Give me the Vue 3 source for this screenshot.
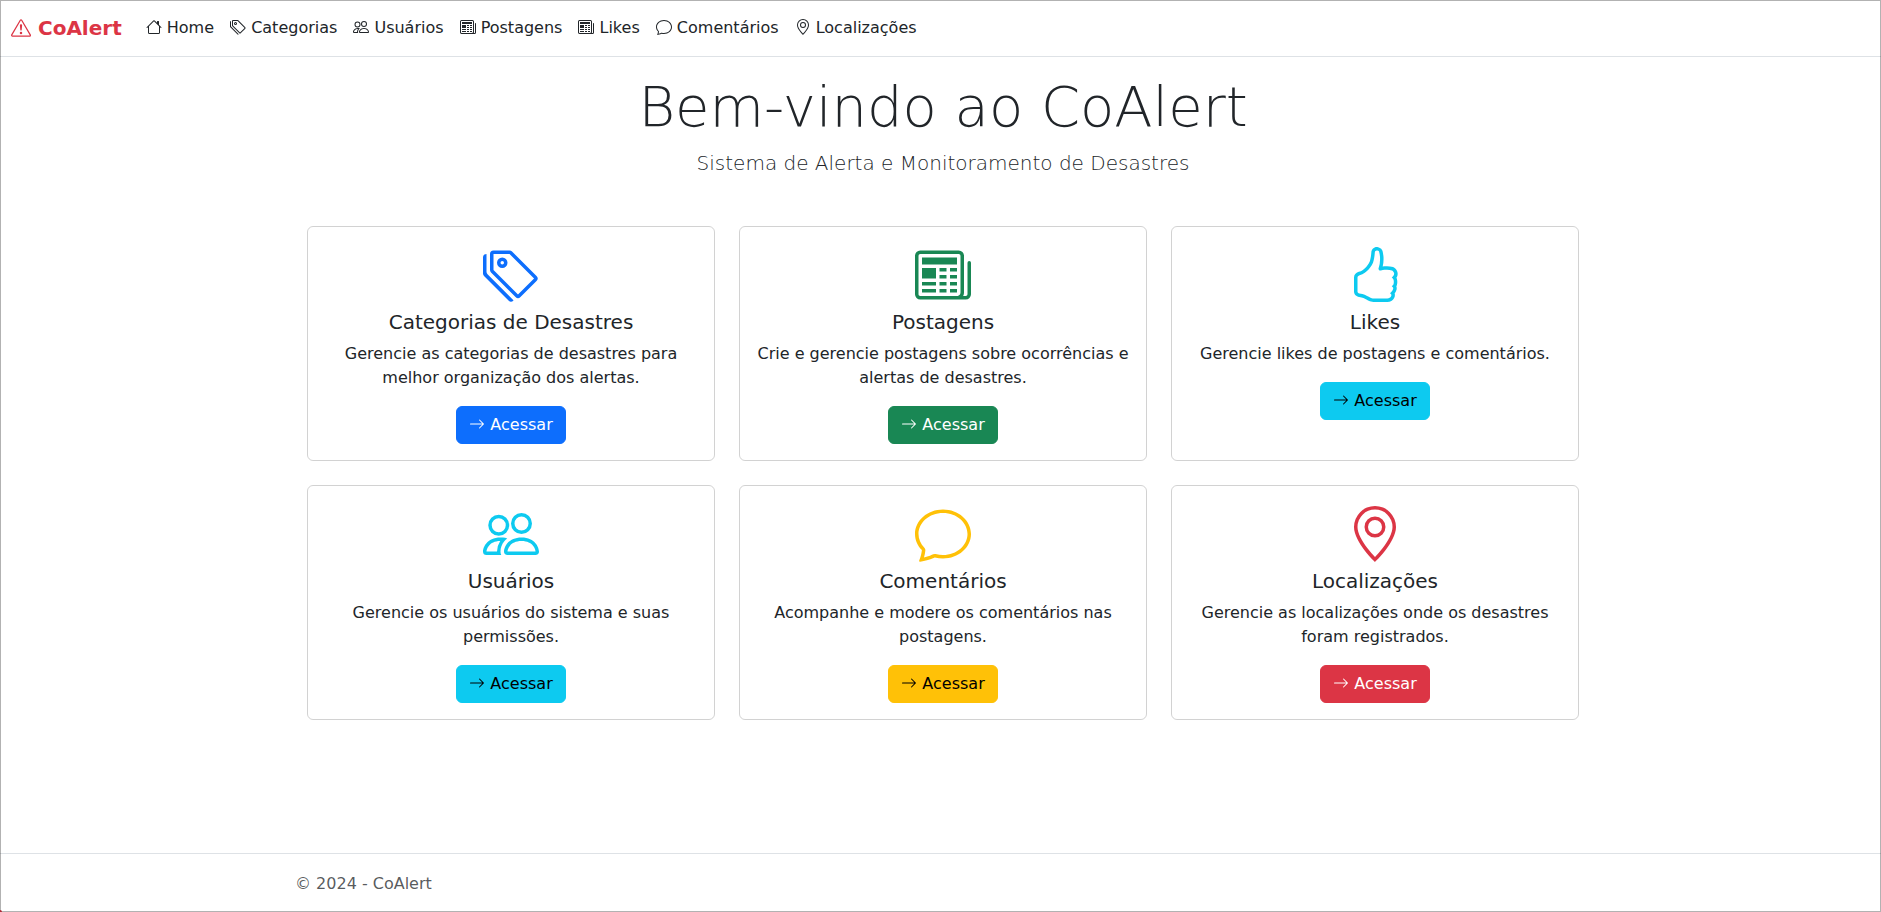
<script setup>
const icons = {
  alert: [
    'M7.938 2.016A.13.13 0 0 1 8.002 2a.13.13 0 0 1 .063.016.15.15 0 0 1 .054.057l6.857 11.667c.036.06.035.124.002.183a.2.2 0 0 1-.054.06.1.1 0 0 1-.066.017H1.146a.1.1 0 0 1-.066-.017.2.2 0 0 1-.054-.06.18.18 0 0 1 .002-.183L7.884 2.073a.15.15 0 0 1 .054-.057m1.044-.45a1.13 1.13 0 0 0-1.96 0L.165 13.233c-.457.778.091 1.767.98 1.767h13.713c.889 0 1.438-.99.98-1.767z',
    'M7.002 12a1 1 0 1 1 2 0 1 1 0 0 1-2 0M7.1 5.995a.905.905 0 1 1 1.8 0l-.35 3.507a.552.552 0 0 1-1.1 0z',
  ],
  house: [
    'M8.707 1.5a1 1 0 0 0-1.414 0L.646 8.146a.5.5 0 0 0 .708.708L2 8.207V13.5A1.5 1.5 0 0 0 3.5 15h9a1.5 1.5 0 0 0 1.5-1.5V8.207l.646.647a.5.5 0 0 0 .708-.708L13 5.793V2.5a.5.5 0 0 0-.5-.5h-1a.5.5 0 0 0-.5.5v1.293zM13 7.207V13.5a.5.5 0 0 1-.5.5h-9a.5.5 0 0 1-.5-.5V7.207l5-5z',
  ],
  tags: [
    'M3 2v4.586l7 7L14.586 9l-7-7zM2 2a1 1 0 0 1 1-1h4.586a1 1 0 0 1 .707.293l7 7a1 1 0 0 1 0 1.414l-4.586 4.586a1 1 0 0 1-1.414 0l-7-7A1 1 0 0 1 2 6.586z',
    'M5.5 5a.5.5 0 1 1 0-1 .5.5 0 0 1 0 1m0 1a1.5 1.5 0 1 0 0-3 1.5 1.5 0 0 0 0 3M1 7.086a1 1 0 0 0 .293.707L8.75 15.25l-.043.043a1 1 0 0 1-1.414 0l-7-7A1 1 0 0 1 0 7.586V3a1 1 0 0 1 1-1z',
  ],
  people: [
    'M15 14s1 0 1-1-1-4-5-4-5 3-5 4 1 1 1 1zm-7.978-1L7 12.996c.001-.264.167-1.03.76-1.72C8.312 10.629 9.282 10 11 10c1.717 0 2.687.63 3.24 1.276.593.69.758 1.457.76 1.72l-.008.002-.014.002zM11 7a2 2 0 1 0 0-4 2 2 0 0 0 0 4m3-2a3 3 0 1 1-6 0 3 3 0 0 1 6 0M6.936 9.28a6 6 0 0 0-1.23-.247A7 7 0 0 0 5 9c-4 0-5 3-5 4q0 1 1 1h4.216A2.24 2.24 0 0 1 5 13c0-1.01.377-2.042 1.09-2.904.243-.294.526-.569.846-.816M4.92 10A5.5 5.5 0 0 0 4 13H1c0-.26.164-1.03.76-1.724.545-.636 1.492-1.256 3.16-1.275ZM1.5 5.5a3 3 0 1 1 6 0 3 3 0 0 1-6 0m3-2a2 2 0 1 0 0 4 2 2 0 0 0 0-4',
  ],
  newspaper: [
    'M0 2.5A1.5 1.5 0 0 1 1.5 1h11A1.5 1.5 0 0 1 14 2.5v10.528c0 .3-.05.654-.238.972h.738a.5.5 0 0 0 .5-.5v-9a.5.5 0 0 1 1 0v9a1.5 1.5 0 0 1-1.5 1.5H1.497A1.497 1.497 0 0 1 0 13.5zM12 14c.37 0 .654-.211.853-.441.092-.106.147-.279.147-.531V2.5a.5.5 0 0 0-.5-.5h-11a.5.5 0 0 0-.5.5v11c0 .278.223.5.497.5z',
    'M2 3h10v2H2zm0 3h4v3H2zm0 4h4v1H2zm0 2h4v1H2zm5-6h2v1H7zm3 0h2v1h-2zM7 8h2v1H7zm3 0h2v1h-2zm-3 2h2v1H7zm3 0h2v1h-2zm-3 2h2v1H7zm3 0h2v1h-2z',
  ],
  chat: [
    'M2.678 11.894a1 1 0 0 1 .287.801 11 11 0 0 1-.398 2c1.395-.323 2.247-.697 2.634-.893a1 1 0 0 1 .71-.074A8 8 0 0 0 8 14c3.996 0 7-2.807 7-6s-3.004-6-7-6-7 2.808-7 6c0 1.468.617 2.83 1.678 3.894m-.493 3.905a22 22 0 0 1-.713.129c-.2.032-.352-.176-.273-.362a10 10 0 0 0 .244-.637l.003-.01c.248-.72.45-1.548.524-2.319C.743 11.37 0 9.76 0 8c0-3.866 3.582-7 8-7s8 3.134 8 7-3.582 7-8 7a9 9 0 0 1-2.347-.306c-.52.263-1.639.742-3.468 1.105',
  ],
  pin: [
    'M12.166 8.94c-.524 1.062-1.234 2.12-1.96 3.07A32 32 0 0 1 8 14.58a32 32 0 0 1-2.206-2.57c-.726-.95-1.436-2.008-1.96-3.07C3.304 7.867 3 6.862 3 6a5 5 0 0 1 10 0c0 .862-.305 1.867-.834 2.94M8 16s6-5.686 6-10A6 6 0 0 0 2 6c0 4.314 6 10 6 10',
    'M8 8a2 2 0 1 1 0-4 2 2 0 0 1 0 4m0 1a3 3 0 1 0 0-6 3 3 0 0 0 0 6',
  ],
  thumb: [
    'M8.864.046C7.908-.193 7.02.53 6.956 1.466c-.072 1.051-.23 2.016-.428 2.59-.125.36-.479 1.013-1.04 1.639-.557.623-1.282 1.178-2.131 1.41C2.685 7.288 2 7.87 2 8.72v4.001c0 .845.682 1.464 1.448 1.545 1.07.114 1.564.415 2.068.723l.048.03c.272.165.578.348.97.484.397.136.861.217 1.466.217h3.5c.937 0 1.599-.477 1.934-1.064a1.86 1.86 0 0 0 .254-.912c0-.152-.023-.312-.077-.464.201-.263.38-.578.488-.901.11-.33.172-.762.004-1.149.069-.13.12-.269.159-.403.077-.27.113-.568.113-.857 0-.288-.036-.585-.113-.856a2 2 0 0 0-.138-.362 1.9 1.9 0 0 0 .234-1.734c-.206-.592-.682-1.1-1.2-1.272-.847-.282-1.803-.276-2.516-.211a10 10 0 0 0-.443.05 9.4 9.4 0 0 0-.062-4.509A1.38 1.38 0 0 0 9.125.111zM11.5 14.721H8c-.51 0-.863-.069-1.14-.164-.281-.097-.506-.228-.776-.393l-.04-.024c-.555-.339-1.198-.731-2.49-.868-.333-.036-.554-.29-.554-.55V8.72c0-.254.226-.543.62-.65 1.095-.3 1.977-.996 2.614-1.708.635-.71 1.064-1.475 1.238-1.978.243-.7.407-1.768.482-2.85.025-.362.36-.594.667-.518l.262.066c.16.04.258.143.288.255a8.34 8.34 0 0 1-.145 4.725.5.5 0 0 0 .595.644l.003-.001.014-.003.058-.014a9 9 0 0 1 1.036-.157c.663-.06 1.457-.054 2.11.164.175.058.45.3.57.65.107.308.087.67-.266 1.022l-.353.353.353.354c.043.043.105.141.154.315.048.167.075.37.075.581 0 .212-.027.414-.075.582-.05.174-.111.272-.154.315l-.353.353.353.354c.047.047.109.177.005.488a2.2 2.2 0 0 1-.505.805l-.353.353.353.354c.006.005.041.05.041.17a.9.9 0 0 1-.121.416c-.165.288-.503.56-1.066.56z',
  ],
  arrow: [
    'M1 8a.5.5 0 0 1 .5-.5h11.793l-3.147-3.146a.5.5 0 0 1 .708-.708l4 4a.5.5 0 0 1 0 .708l-4 4a.5.5 0 0 1-.708-.708L13.293 8.5H1.5A.5.5 0 0 1 1 8',
  ],
}

const links = [
  { icon: 'house', label: 'Home' },
  { icon: 'tags', label: 'Categorias' },
  { icon: 'people', label: 'Usuários' },
  { icon: 'newspaper', label: 'Postagens' },
  { icon: 'newspaper', label: 'Likes' },
  { icon: 'chat', label: 'Comentários' },
  { icon: 'pin', label: 'Localizações' },
]

const cards = [
  { icon: 'tags', tone: 'primary', title: 'Categorias de Desastres', text: 'Gerencie as categorias de desastres para melhor organização dos alertas.' },
  { icon: 'newspaper', tone: 'success', title: 'Postagens', text: 'Crie e gerencie postagens sobre ocorrências e alertas de desastres.' },
  { icon: 'thumb', tone: 'info', title: 'Likes', text: 'Gerencie likes de postagens e comentários.' },
  { icon: 'people', tone: 'info', title: 'Usuários', text: 'Gerencie os usuários do sistema e suas permissões.' },
  { icon: 'chat', tone: 'warning', title: 'Comentários', text: 'Acompanhe e modere os comentários nas postagens.' },
  { icon: 'pin', tone: 'danger', title: 'Localizações', text: 'Gerencie as localizações onde os desastres foram registrados.' },
]
</script>

<template>
  <div class="page">
    <header>
      <nav class="navbar">
        <a class="brand" href="#"><svg class="icon brand-icon" viewBox="0 0 16 16" aria-hidden="true"><path v-for="d in icons.alert" :key="d" :d="d" /></svg> CoAlert</a>
        <ul class="nav-list">
          <li v-for="link in links" :key="link.label">
            <a class="nav-link" href="#"><svg class="icon" viewBox="0 0 16 16" aria-hidden="true"><path v-for="d in icons[link.icon]" :key="d" :d="d" /></svg> {{ link.label }}</a>
          </li>
        </ul>
      </nav>
    </header>

    <main class="main">
      <div class="container">
        <h1 class="title">Bem-vindo ao CoAlert</h1>
        <p class="lead">Sistema de Alerta e Monitoramento de Desastres</p>
        <div class="grid">
          <section v-for="card in cards" :key="card.title" class="card" :class="card.tone">
            <svg class="card-icon" viewBox="0 0 16 16" aria-hidden="true"><path v-for="d in icons[card.icon]" :key="d" :d="d" /></svg>
            <h2 class="card-title">{{ card.title }}</h2>
            <p class="card-text">{{ card.text }}</p>
            <a class="btn" href="#"><svg class="icon" viewBox="0 0 16 16" aria-hidden="true"><path v-for="d in icons.arrow" :key="d" :d="d" /></svg> Acessar</a>
          </section>
        </div>
      </div>
    </main>

    <footer class="footer">
      <div class="container">&copy; 2024 - CoAlert</div>
    </footer>
  </div>
</template>

<style>
body {
  margin: 0;
  background: #fff;
}
</style>

<style scoped>
.page,
.page * {
  box-sizing: border-box;
}
.page {
  position: relative;
  display: flex;
  flex-direction: column;
  min-height: 100vh;
  outline: 1px solid rgba(0, 0, 0, 0.3);
  outline-offset: -1px;
  font-family: "DejaVu Sans", sans-serif;
  font-size: 16px;
  line-height: 24px;
  color: #212529;
}
.page::after {
  content: "";
  position: absolute;
  left: 0;
  bottom: 0;
  width: 2px;
  height: 2px;
  border-top-right-radius: 2px;
  background: #b02a37;
}
a {
  text-decoration: none;
}
.icon {
  width: 16px;
  height: 16px;
  fill: currentColor;
  vertical-align: -2px;
}
.navbar {
  display: flex;
  align-items: center;
  flex-wrap: wrap;
  padding: 8px 11px;
  border-bottom: 1px solid #dee2e6;
}
.brand {
  margin-right: 16px;
  font-size: 20px;
  line-height: 30px;
  font-weight: 700;
  color: #dc3545;
}
.brand-icon {
  width: 20px;
  height: 20px;
  vertical-align: -3px;
}
.nav-list {
  display: flex;
  flex-wrap: wrap;
  margin: 0;
  padding: 0;
  list-style: none;
}
.nav-link {
  display: block;
  padding: 8px;
  color: #212529;
}
.container {
  width: 100%;
  max-width: 1320px;
  margin: 0 auto;
  padding: 0 12px;
}
.main {
  flex: 1;
  padding: 16px 0 24px 5px;
  text-align: center;
}
.title {
  margin: 0 0 8px;
  font-size: 56px;
  line-height: 67px;
  font-weight: 300;
}
.lead {
  margin: 0 0 48px;
  font-size: 20px;
  line-height: 30px;
  font-weight: 300;
}
.grid {
  display: grid;
  grid-template-columns: repeat(auto-fit, minmax(360px, 1fr));
  gap: 24px;
  padding: 0 12px;
}
.card {
  --tone: #0d6efd;
  --on-tone: #fff;
  padding: 16px;
  border: 1px solid rgba(0, 0, 0, 0.175);
  border-radius: 6px;
}
.card.success {
  --tone: #198754;
}
.card.info {
  --tone: #0dcaf0;
  --on-tone: #000;
}
.card.warning {
  --tone: #ffc107;
  --on-tone: #000;
}
.card.danger {
  --tone: #dc3545;
}
.card-icon {
  display: block;
  width: 56px;
  height: 56px;
  margin: 4px auto 7px;
  fill: var(--tone);
}
.card-title {
  margin: 0 0 8px;
  font-size: 20px;
  line-height: 24px;
  font-weight: 500;
}
.card-text {
  margin: 0 0 16px;
}
.btn {
  display: inline-block;
  padding: 6px 12px;
  border: 1px solid var(--tone);
  border-radius: 6px;
  background: var(--tone);
  color: var(--on-tone);
  vertical-align: middle;
}
.footer {
  border-top: 1px solid #dee2e6;
  padding: 18px 0 16px 5px;
  color: rgba(33, 37, 41, 0.75);
}
</style>
